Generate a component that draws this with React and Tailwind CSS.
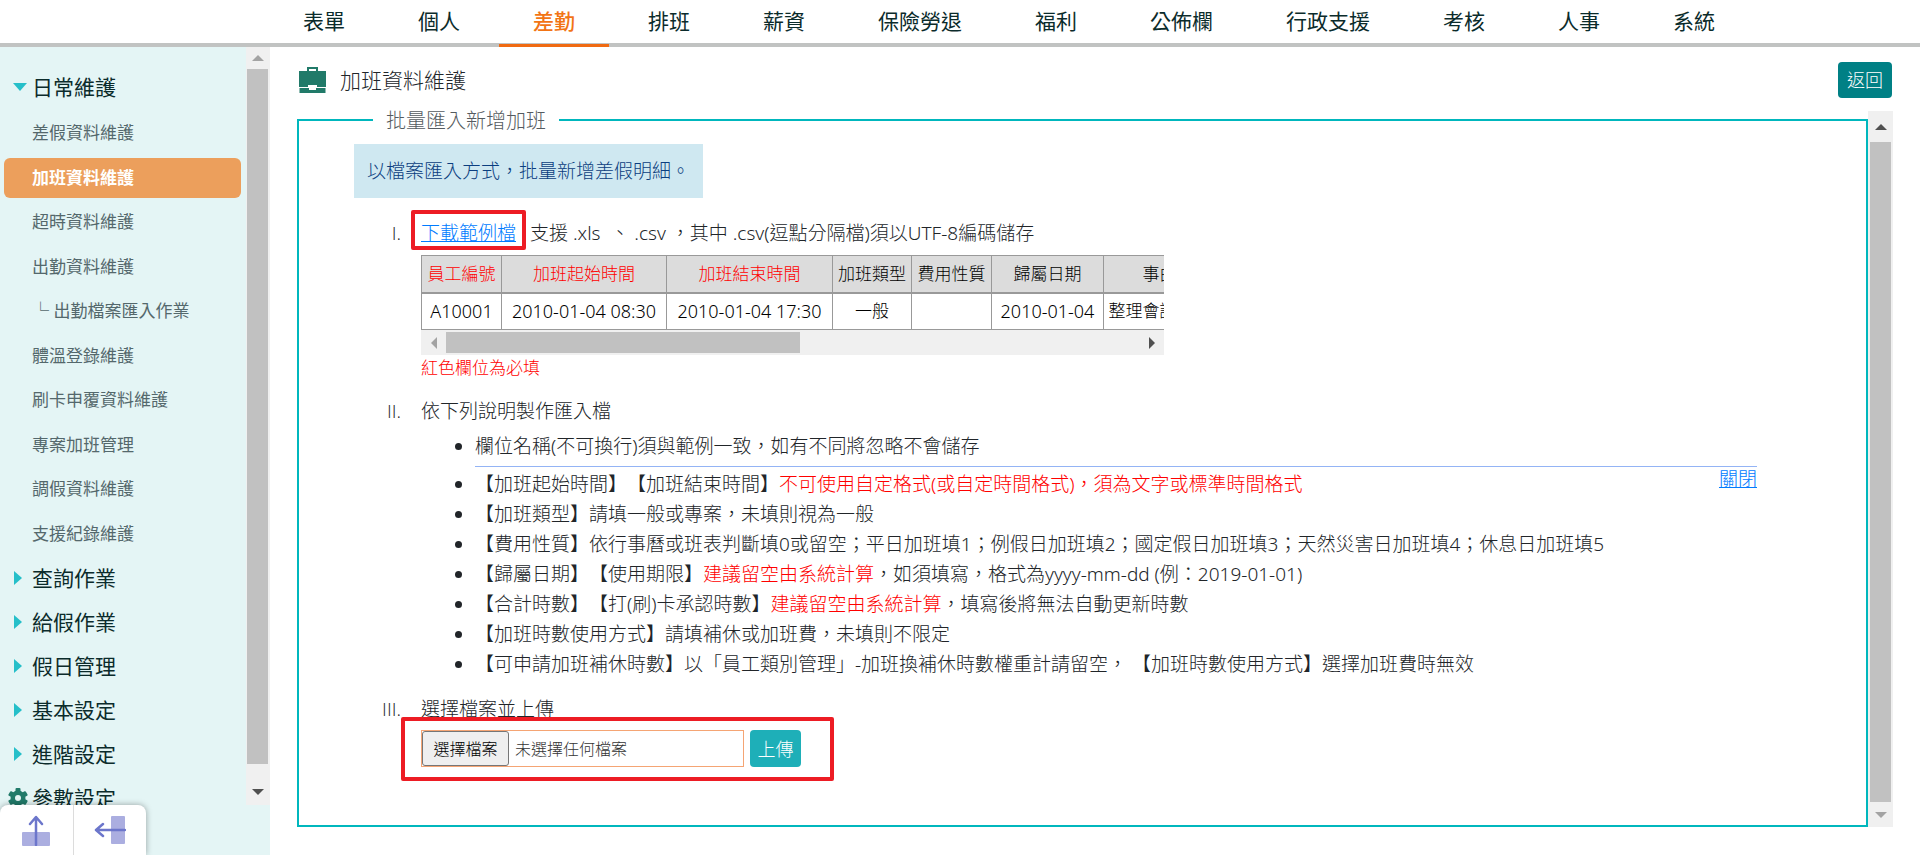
import React from "react";

const TABS = ["表單", "個人", "差勤", "排班", "薪資", "保險勞退", "福利", "公佈欄", "行政支援", "考核", "人事", "系統"];

const DAILY = [
  "差假資料維護",
  "加班資料維護",
  "超時資料維護",
  "出勤資料維護",
  "└ 出勤檔案匯入作業",
  "體溫登錄維護",
  "刷卡申覆資料維護",
  "專案加班管理",
  "調假資料維護",
  "支援紀錄維護",
];

const GROUPS = ["查詢作業", "給假作業", "假日管理", "基本設定", "進階設定"];

const COLUMNS = [
  { name: "員工編號", value: "A10001", required: true, width: "w-[80px]" },
  { name: "加班起始時間", value: "2010-01-04 08:30", required: true, width: "w-[165px]" },
  { name: "加班結束時間", value: "2010-01-04 17:30", required: true, width: "w-[166px]" },
  { name: "加班類型", value: "一般", width: "w-[79px]" },
  { name: "費用性質", value: "", width: "w-[80px]" },
  { name: "歸屬日期", value: "2010-01-04", width: "w-[112px]" },
  { name: "事由", value: "整理會議資料", width: "w-[112px]" },
  { name: "備註", value: "", width: "w-[300px]" },
];

function Triangle({ points, className }) {
  return (
    <svg viewBox="0 0 12 12" className={"h-3 w-3 " + className} aria-hidden="true">
      <polygon points={points} fill="currentColor" />
    </svg>
  );
}

const UP = "0,9 6,3 12,9";
const DOWN = "0,3 6,9 12,3";
const LEFT = "9,0 3,6 9,12";
const RIGHT = "3,0 9,6 3,12";

function Briefcase() {
  return (
    <svg viewBox="0 0 27 26" className="h-[26px] w-[27px] shrink-0" aria-hidden="true">
      <path d="M9 4V1h9v3" fill="none" stroke="#217a69" strokeWidth="2" />
      <path d="M0 4h27v16h-9v-2H9v2H0z" fill="#217a69" />
      <path d="M.5 21h9.500v2h7v-2h9.500v5H.5z" fill="#217a69" />
    </svg>
  );
}

function Gear() {
  return (
    <svg viewBox="0 0 20 20" className="h-5 w-5" aria-hidden="true">
      <g fill="#217a69">
        <rect x="7.500" y="0" width="5" height="20" rx="1" />
        <rect x="7.500" y="0" width="5" height="20" rx="1" transform="rotate(60 10 10)" />
        <rect x="7.500" y="0" width="5" height="20" rx="1" transform="rotate(120 10 10)" />
        <circle cx="10" cy="10" r="7.500" />
      </g>
      <circle cx="10" cy="10" r="3" fill="#e4f5f5" />
    </svg>
  );
}

function Sidebar() {
  return (
    <aside className="relative flex w-[270px] shrink-0 flex-col bg-[#e4f5f5] pb-[50px]">
      <div className="flex min-h-0 flex-1">
        <nav className="min-w-0 flex-1 overflow-hidden pt-[18px] text-[21px] text-[#0b2b2b]">
          <a href="#daily" className="flex h-11 items-center">
            <span className="flex w-8 pl-[13px]">
              <svg viewBox="0 0 14 8" className="h-2 w-3.5 text-[#25bfc9]" aria-hidden="true">
                <path d="M0 0h14L7 8z" fill="currentColor" />
              </svg>
            </span>
            日常維護
          </a>
          <ul className="mt-0.5 flex h-[445px] flex-col text-[17px] text-[#54686c]">
            {DAILY.map((t, i) => (
              <li key={t} className="flex flex-1 items-center pr-[5px] pl-1">
                <a
                  href={"#item" + i}
                  className={
                    i === 1
                      ? "flex h-10 flex-1 items-center rounded-md bg-[#ec9f5c] pl-7 font-bold text-white"
                      : "flex h-10 flex-1 items-center pl-7"
                  }
                >
                  {t}
                </a>
              </li>
            ))}
          </ul>
          <ul>
            {GROUPS.map((t, i) => (
              <li key={t}>
                <a href={"#group" + i} className="flex h-11 items-center">
                  <span className="flex w-8 pl-3.5">
                    <svg viewBox="0 0 8 14" className="h-3.5 w-2 text-[#25bfc9]" aria-hidden="true">
                      <path d="M0 0v14l8-7z" fill="currentColor" />
                    </svg>
                  </span>
                  {t}
                </a>
              </li>
            ))}
            <li>
              <a href="#params" className="flex h-11 items-center">
                <span className="flex w-8 pl-2">
                  <Gear />
                </span>
                參數設定
              </a>
            </li>
          </ul>
        </nav>
        <div className="flex w-6 shrink-0 flex-col bg-[#f0f0f0] pl-px">
          <button type="button" aria-label="向上捲動" className="flex h-[22px] w-[21px] items-center justify-center">
            <Triangle points={UP} className="text-[#a3a3a3]" />
          </button>
          <div className="w-[21px] flex-1 bg-[#c1c1c1]" />
          <button type="button" aria-label="向下捲動" className="flex h-[41px] w-[21px] items-center justify-center pt-3.5">
            <Triangle points={DOWN} className="text-[#505050]" />
          </button>
        </div>
      </div>
      <div className="absolute bottom-0 left-0 flex h-[50px] w-[146px] rounded-t-lg bg-white shadow-[0_0_6px_rgba(0,0,0,0.35)]">
        <button type="button" aria-label="收合上方選單" className="flex flex-1 items-center justify-center border-r border-[#dcdcdc]">
          <svg viewBox="0 0 30 32" className="h-8 w-[30px]" aria-hidden="true">
            <rect x="1" y="18" width="28" height="14" rx="1" fill="#abaee0" />
            <path d="M15 31V4M9 10l6-7 6 7" fill="none" stroke="#6c76cb" strokeWidth="2.500" strokeLinecap="round" strokeLinejoin="round" />
          </svg>
        </button>
        <button type="button" aria-label="收合側邊選單" className="flex flex-1 items-center justify-center">
          <svg viewBox="0 0 32 30" className="h-[30px] w-8" aria-hidden="true">
            <rect x="17" y="1" width="14" height="28" rx="1" fill="#abaee0" />
            <path d="M31 15H3M9 9l-7 6 7 6" fill="none" stroke="#6c76cb" strokeWidth="2.500" strokeLinecap="round" strokeLinejoin="round" />
          </svg>
        </button>
      </div>
    </aside>
  );
}

function SampleTable() {
  return (
    <div className="mt-[7px] w-[743px] overflow-hidden text-[17px] text-black">
      <table className="w-[1094px] table-fixed border-collapse bg-white text-center whitespace-nowrap">
        <thead>
          <tr className="h-[37px] bg-[#dcdcdc]">
            {COLUMNS.map((c) => (
              <th
                key={c.name}
                className={"border border-b-2 border-[#999] p-0 font-light " + c.width + (c.required ? " text-[#ff0000]" : "")}
              >
                {c.name}
              </th>
            ))}
          </tr>
        </thead>
        <tbody>
          <tr className="h-[37px]">
            {COLUMNS.map((c) => (
              <td key={c.name} className={"border border-[#999] p-0" + (/\d/.test(c.value) ? " text-[18px]" : "")}>
                {c.value}
              </td>
            ))}
          </tr>
        </tbody>
      </table>
      <div className="flex h-[25px] items-center bg-[#f0f0f0]">
        <button type="button" aria-label="向左捲動" className="flex w-[25px] justify-center">
          <Triangle points={LEFT} className="text-[#a3a3a3]" />
        </button>
        <div className="h-[21px] w-[354px] bg-[#c1c1c1]" />
        <button type="button" aria-label="向右捲動" className="ml-auto flex w-[25px] justify-center">
          <Triangle points={RIGHT} className="text-[#505050]" />
        </button>
      </div>
    </div>
  );
}

function Step({ mark, children, className = "" }) {
  return (
    <li className={"flex " + className}>
      <span className="w-[47px] shrink-0 text-right font-['Open_Sans',sans-serif]">{mark}</span>
      <div className="ml-5 min-w-0 flex-1">{children}</div>
    </li>
  );
}

function Red({ children }) {
  return <span className="text-[#ff0000]">{children}</span>;
}

export default function App() {
  return (
    <div
      lang="zh-Hant"
      className="flex h-screen min-h-[855px] flex-col bg-white font-['Noto_Sans','Noto_Sans_CJK_TC',sans-serif] text-[19px] leading-[30px] text-[#212529] [text-spacing-trim:space-all]"
    >
      <header className="h-[47px] shrink-0 border-b-4 border-[#c1c3c2]">
        <nav className="flex h-[47px] gap-[5px] pl-[269px] text-[21px] text-[#0b2b2b]">
          {TABS.map((t) => (
            <a
              key={t}
              href={"#" + t}
              className={
                t === "差勤"
                  ? "flex shrink-0 items-center border-b-3 border-[#f06a12] px-[34px] pb-0.5 font-medium text-[#f27415]"
                  : "flex shrink-0 items-center border-b-3 border-transparent px-[34px] pb-0.5"
              }
            >
              {t}
            </a>
          ))}
        </nav>
      </header>

      <div className="flex min-h-0 flex-1">
        <Sidebar />
        <main className="flex min-w-0 flex-1 flex-col px-[27px] pt-[15px] pb-7 font-light">
          <div className="flex h-9 items-center pr-px pl-0.5">
            <Briefcase />
            <h1 className="ml-3.5 text-[21px]">加班資料維護</h1>
            <button type="button" className="ml-auto h-9 w-[54px] rounded bg-[#008085] text-[18px] text-white">
              返回
            </button>
          </div>

          <div className="mt-[13px] flex min-h-0 flex-1">
            <fieldset className="min-w-0 flex-1 border-2 border-[#00b7bd] pr-[109px] pl-[55px]">
              <legend className="ml-[19px] px-[13px] pt-0.5 text-[20px] leading-4 text-[#555b60]">批量匯入新增加班</legend>
              <p className="mt-[15px] w-fit bg-[#cfe8f1] px-[13px] py-3 text-[#0b3e80]">以檔案匯入方式，批量新增差假明細。</p>

              <ol className="mt-5">
                <Step mark="I.">
                  <p>
                    <span className="relative mr-3.5 inline-block">
                      <a href="#sample" className="text-[#007bff] underline">
                        下載範例檔
                      </a>
                      <span className="pointer-events-none absolute -inset-x-[10px] -top-2 bottom-[-2px] rounded-xs border-4 border-[#ed1c24]" />
                    </span>
                    支援 .xls &nbsp;、 .csv ，其中 .csv(逗點分隔檔)須以UTF-8編碼儲存
                  </p>
                  <SampleTable />
                  <p className="text-[17px] leading-[26px]">
                    <Red>紅色欄位為必填</Red>
                  </p>
                </Step>

                <Step mark="II." className="mt-[15px]">
                  <p>依下列說明製作匯入檔</p>
                  <ul className="mt-[5px] list-disc pl-[54px]">
                    <li>欄位名稱(不可換行)須與範例一致，如有不同將忽略不會儲存</li>
                  </ul>
                  <hr className="mt-[5px] mb-0.5 ml-[54px] border-[#94b4f5]" />
                  <div className="flex items-start justify-between">
                    <ul className="list-disc pl-[54px]">
                      <li>
                        【加班起始時間】【加班結束時間】<Red>不可使用自定格式(或自定時間格式)，須為文字或標準時間格式</Red>
                      </li>
                      <li>【加班類型】請填一般或專案，未填則視為一般</li>
                      <li>【費用性質】依行事曆或班表判斷填0或留空；平日加班填1；例假日加班填2；國定假日加班填3；天然災害日加班填4；休息日加班填5</li>
                      <li>
                        【歸屬日期】【使用期限】<Red>建議留空由系統計算</Red>，如須填寫，格式為yyyy-mm-dd (例：2019-01-01)
                      </li>
                      <li>
                        【合計時數】【打(刷)卡承認時數】<Red>建議留空由系統計算</Red>，填寫後將無法自動更新時數
                      </li>
                      <li>【加班時數使用方式】請填補休或加班費，未填則不限定</li>
                      <li>【可申請加班補休時數】以「員工類別管理」-加班換補休時數權重計請留空， 【加班時數使用方式】選擇加班費時無效</li>
                    </ul>
                    <a href="#close" className="shrink-0 leading-5 text-[#007bff] underline">
                      關閉
                    </a>
                  </div>
                </Step>

                <Step mark="III." className="mt-[15px]">
                  <p>選擇檔案並上傳</p>
                  <div className="relative mt-1.5 flex w-fit items-center gap-1.5">
                    <label className="flex h-[37px] w-[323px] items-center border border-[#f5a574] text-[16px] text-[#333]">
                      <input type="file" className="sr-only" />
                      <span className="flex h-[35px] w-[87px] items-center justify-center rounded-[3px] border border-[#767676] bg-[#efefef] text-black">
                        選擇檔案
                      </span>
                      <span className="ml-1.5">未選擇任何檔案</span>
                    </label>
                    <button type="button" className="h-[37px] w-[51px] rounded bg-[#1eafb8] text-[18px] text-white">
                      上傳
                    </button>
                    <span className="pointer-events-none absolute -top-[13px] -right-[33px] -bottom-[14px] -left-5 rounded-xs border-4 border-[#ed1c24]" />
                  </div>
                </Step>
              </ol>
            </fieldset>

            <div className="flex w-[25px] shrink-0 flex-col items-center bg-[#f0f0f0]">
              <button type="button" aria-label="向上捲動" className="flex h-[31px] items-center">
                <Triangle points={UP} className="text-[#505050]" />
              </button>
              <div className="w-[21px] flex-1 bg-[#c1c1c1]" />
              <button type="button" aria-label="向下捲動" className="flex h-[25px] items-center">
                <Triangle points={DOWN} className="text-[#a3a3a3]" />
              </button>
            </div>
          </div>
        </main>
      </div>
    </div>
  );
}
